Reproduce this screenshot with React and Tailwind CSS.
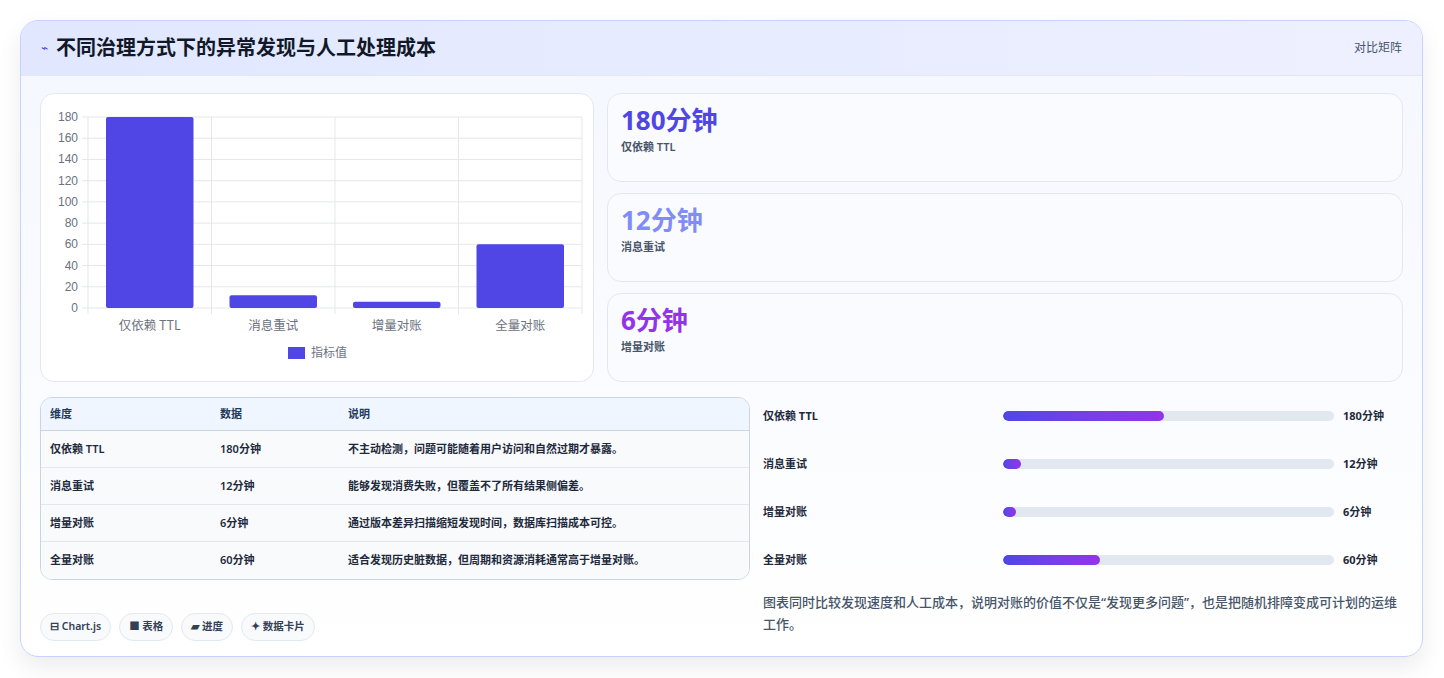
export default function App() {
  const W = 553, H = 288;
  const left = 47, right = 541, top = 23, bottom = 214;
  const yv = (v) => bottom - (v / 180) * (bottom - top);
  const ticks = [0, 20, 40, 60, 80, 100, 120, 140, 160, 180];
  const cats = ["仅依赖 TTL", "消息重试", "增量对账", "全量对账"];
  const vals = [180, 12, 6, 60];
  const cw = (right - left) / 4;
  const rows = [
    ["仅依赖 TTL", "180分钟", "不主动检测，问题可能随着用户访问和自然过期才暴露。"],
    ["消息重试", "12分钟", "能够发现消费失败，但覆盖不了所有结果侧偏差。"],
    ["增量对账", "6分钟", "通过版本差异扫描缩短发现时间，数据库扫描成本可控。"],
    ["全量对账", "60分钟", "适合发现历史脏数据，但周期和资源消耗通常高于增量对账。"],
  ];
  const bars = [
    ["仅依赖 TTL", "180分钟", 161],
    ["消息重试", "12分钟", 18],
    ["增量对账", "6分钟", 13],
    ["全量对账", "60分钟", 97],
  ];
  const stats = [
    ["180分钟", "仅依赖 TTL", "text-[#4f46e5]"],
    ["12分钟", "消息重试", "text-[#818cf8]"],
    ["6分钟", "增量对账", "text-[#9333ea]"],
  ];
  return (
    <div className="w-[1444px] h-[678px] bg-white pt-5 px-5" style={{ fontFamily: '"Noto Sans", "Noto Sans CJK SC", sans-serif' }}>
      <div className="w-[1403px] h-[637px] rounded-[18px] border border-[#c7d2fe] bg-gradient-to-b from-[#f5f7ff] to-white shadow-[0_10px_25px_rgba(0,0,0,0.08)] overflow-hidden">
        <div className="h-[55px] flex items-center justify-between px-5 bg-gradient-to-r from-[#e0e7ff] to-[#eef0ff] border-b border-[#e0e7ff]">
          <div className="flex items-center gap-2">
            <span className="text-[#4f46e5] text-[12px]">⌁</span>
            <span className="text-[20px] font-bold text-[#111827]">不同治理方式下的异常发现与人工处理成本</span>
          </div>
          <span className="text-[12px] text-[#475569]">对比矩阵</span>
        </div>
        <div className="px-[19px] pt-[17px]">
          <div className="flex gap-[13px]">
            <div className="w-[554px] h-[289px] bg-white rounded-[14px] border border-[#e2e8f0] shrink-0">
              <svg width={W} height={H} style={{ fontFamily: '"Liberation Sans", Arial, sans-serif' }}>
                {ticks.map((t) => (
                  <g key={t}>
                    <line x1={left - 6} x2={right} y1={yv(t)} y2={yv(t)} stroke="#e5e7eb" />
                    <text x={left - 10} y={yv(t) + 4} textAnchor="end" fontSize="12" fill="#6b7280">{t}</text>
                  </g>
                ))}
                {[0, 1, 2, 3, 4].map((i) => (
                  <line key={i} x1={left + i * cw} x2={left + i * cw} y1={top} y2={bottom + 6} stroke="#e5e7eb" />
                ))}
                {vals.map((v, i) => (
                  <rect key={i} x={left + i * cw + 18} width={cw - 36} y={yv(v)} height={bottom - yv(v)} fill="#4f46e5" rx="2" />
                ))}
                {cats.map((c, i) => (
                  <text key={c} x={left + i * cw + cw / 2} y={236} textAnchor="middle" fontSize="12.5" fill="#6b7280" style={{ fontFamily: '"Noto Sans CJK SC", sans-serif' }}>{c}</text>
                ))}
                <rect x={247} y={253} width={17} height={12} fill="#4f46e5" />
                <text x={270} y={263} fontSize="12" fill="#6b7280" style={{ fontFamily: '"Noto Sans CJK SC", sans-serif' }}>指标值</text>
              </svg>
            </div>
            <div className="flex-1 flex flex-col gap-[11px]">
              {stats.map(([v, l, c]) => (
                <div key={v} className="h-[89px] rounded-[14px] border border-[#e2e8f0] bg-[#fafbff] px-[13px] pt-[7px]">
                  <div className={`text-[26px] font-bold leading-[38px] ${c}`}>{v}</div>
                  <div className="text-[11px] text-[#475569] font-semibold">{l}</div>
                </div>
              ))}
            </div>
          </div>
          <div className="flex gap-[13px] mt-[15px]">
            <div className="w-[710px] shrink-0">
              <div className="rounded-[12px] border border-[#cbd5e1] overflow-hidden text-[11px] text-[#1e293b]">
                <div className="flex h-[33px] items-center bg-[#eff6ff] font-semibold text-[#1e3a5f] border-b border-[#cbd5e1]">
                  <div className="w-[179px] pl-[9px]">维度</div>
                  <div className="w-[128px]">数据</div>
                  <div className="flex-1">说明</div>
                </div>
                {rows.map((r, i) => (
                  <div key={i} className={`flex h-[37px] items-center font-semibold bg-[#f8fafc] ${i < 3 ? "border-b border-[#e2e8f0]" : ""}`}>
                    <div className="w-[179px] pl-[9px]">{r[0]}</div>
                    <div className="w-[128px]">{r[1]}</div>
                    <div className="flex-1">{r[2]}</div>
                  </div>
                ))}
              </div>
              <div className="flex gap-2 mt-[33px]">
                {["⊟ Chart.js", "■ 表格", "▰ 进度", "✦ 数据卡片"].map((c) => (
                  <span key={c} className="h-[28px] px-[9px] flex items-center rounded-full border border-[#e2e8f0] bg-[#f8fafc] text-[10.5px] font-semibold text-[#334155]">{c}</span>
                ))}
              </div>
            </div>
            <div className="flex-1 -mt-[5px]">
              <div className="flex flex-col">
                {bars.map(([l, v, w]) => (
                  <div key={l} className="h-[48px] flex items-center text-[11px] font-bold text-[#1e293b]">
                    <div className="w-[240px]">{l}</div>
                    <div className="w-[331px] h-[10px] rounded-full bg-[#e2e8f0] overflow-hidden">
                      <div className="h-full rounded-full bg-gradient-to-r from-[#4f46e5] to-[#9333ea]" style={{ width: w }} />
                    </div>
                    <div className="ml-[9px]">{v}</div>
                  </div>
                ))}
              </div>
              <p className="mt-[7px] text-[13px] leading-[22px] text-[#475569] font-medium">图表同时比较发现速度和人工成本，说明对账的价值不仅是“发现更多问题”，也是把随机排障变成可计划的运维工作。</p>
            </div>
          </div>
        </div>
      </div>
    </div>
  );
}
